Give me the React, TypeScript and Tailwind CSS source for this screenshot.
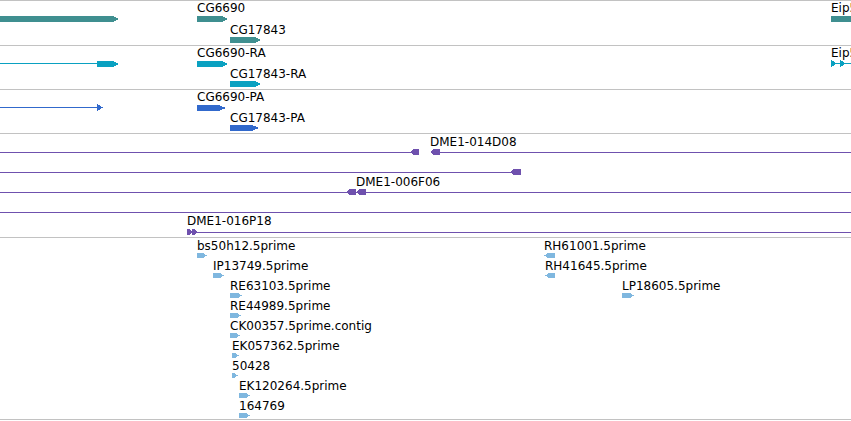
import React from "react";

type Label = { x: number; y: number; text: string };

// shapes are in page coordinates; each track shifts them by its own origin
type Shape =
  | { kind: "bar"; x0: number; x1: number; y: number; h: number; taper?: number }
  | { kind: "line"; x0: number; x1: number; y: number }
  | { kind: "right"; x0: number; x1: number; y: number; h: number; taper?: number }
  | { kind: "left"; x0: number; x1: number; y: number; h: number };

type TrackData = {
  top: number;
  height: number;
  color: string;
  labels: Label[];
  shapes: Shape[];
  last?: boolean;
};

const TEAL = "#3f8f90";
const CYAN = "#0aa1c1";
const BLUE = "#3169cc";
const PURPLE = "#6f51ae";
const LIGHT = "#7fb7df";

const tracks: TrackData[] = [
  {
    top: 0,
    height: 45,
    color: TEAL,
    labels: [
      { x: 197, y: 12, text: "CG6690" },
      { x: 230, y: 34, text: "CG17843" },
      { x: 831, y: 12, text: "Eip55E" },
    ],
    shapes: [
      { kind: "bar", x0: 0, x1: 119, y: 16, h: 6 },
      { kind: "bar", x0: 197, x1: 228, y: 16, h: 6 },
      { kind: "bar", x0: 230, x1: 261, y: 37, h: 6 },
      { kind: "bar", x0: 831, x1: 860, y: 16, h: 6 },
    ],
  },
  {
    top: 45,
    height: 44,
    color: CYAN,
    labels: [
      { x: 197, y: 57, text: "CG6690-RA" },
      { x: 230, y: 78, text: "CG17843-RA" },
      { x: 831, y: 57, text: "Eip55E-RA" },
    ],
    shapes: [
      { kind: "line", x0: 0, x1: 98, y: 63 },
      { kind: "bar", x0: 97, x1: 119, y: 61, h: 6 },
      { kind: "bar", x0: 197, x1: 228, y: 61, h: 6 },
      { kind: "bar", x0: 230, x1: 261, y: 81, h: 6 },
      { kind: "line", x0: 831, x1: 851, y: 63 },
      { kind: "right", x0: 831, x1: 837, y: 60, h: 7, taper: 6 },
      { kind: "right", x0: 840, x1: 846, y: 60, h: 7, taper: 6 },
    ],
  },
  {
    top: 89,
    height: 44,
    color: BLUE,
    labels: [
      { x: 197, y: 101, text: "CG6690-PA" },
      { x: 230, y: 122, text: "CG17843-PA" },
    ],
    shapes: [
      { kind: "line", x0: 0, x1: 98, y: 107 },
      { kind: "right", x0: 97, x1: 103, y: 104, h: 7, taper: 6 },
      { kind: "bar", x0: 197, x1: 226, y: 105, h: 6, taper: 7 },
      { kind: "bar", x0: 230, x1: 259, y: 125, h: 6, taper: 7 },
    ],
  },
  {
    top: 133,
    height: 104,
    color: PURPLE,
    labels: [
      { x: 430, y: 146, text: "DME1-014D08" },
      { x: 356, y: 186, text: "DME1-006F06" },
      { x: 187, y: 225, text: "DME1-016P18" },
    ],
    shapes: [
      { kind: "line", x0: 0, x1: 412, y: 152 },
      { kind: "left", x0: 410, x1: 419, y: 149, h: 6 },
      { kind: "left", x0: 430, x1: 440, y: 149, h: 6 },
      { kind: "line", x0: 438, x1: 851, y: 152 },
      { kind: "line", x0: 0, x1: 512, y: 172 },
      { kind: "left", x0: 510, x1: 521, y: 169, h: 6 },
      { kind: "line", x0: 0, x1: 851, y: 192 },
      { kind: "left", x0: 346, x1: 356, y: 189, h: 6 },
      { kind: "left", x0: 356, x1: 366, y: 189, h: 6 },
      { kind: "line", x0: 0, x1: 851, y: 212 },
      { kind: "line", x0: 189, x1: 851, y: 232 },
      { kind: "right", x0: 187, x1: 193, y: 229, h: 6 },
      { kind: "right", x0: 192, x1: 198, y: 229, h: 6 },
    ],
  },
];

const ests: { x: number; x1: number; text: string; row: number; dir: "r" | "l" }[] = [
  { x: 197, x1: 207, text: "bs50h12.5prime", row: 0, dir: "r" },
  { x: 213, x1: 224, text: "IP13749.5prime", row: 1, dir: "r" },
  { x: 230, x1: 242, text: "RE63103.5prime", row: 2, dir: "r" },
  { x: 230, x1: 241, text: "RE44989.5prime", row: 3, dir: "r" },
  { x: 230, x1: 240, text: "CK00357.5prime.contig", row: 4, dir: "r" },
  { x: 232, x1: 239, text: "EK057362.5prime", row: 5, dir: "r" },
  { x: 232, x1: 238, text: "50428", row: 6, dir: "r" },
  { x: 239, x1: 250, text: "EK120264.5prime", row: 7, dir: "r" },
  { x: 239, x1: 250, text: "164769", row: 8, dir: "r" },
  { x: 544, x1: 555, text: "RH61001.5prime", row: 0, dir: "l" },
  { x: 545, x1: 555, text: "RH41645.5prime", row: 1, dir: "l" },
  { x: 622, x1: 634, text: "LP18605.5prime", row: 2, dir: "r" },
];

tracks.push({
  top: 237,
  height: 183,
  color: LIGHT,
  last: true,
  labels: ests.map((e) => ({ x: e.x, y: 250 + e.row * 20, text: e.text })),
  shapes: ests.map((e) =>
    e.dir === "r"
      ? ({ kind: "right", x0: e.x, x1: e.x1, y: 253 + e.row * 20, h: 5 } as Shape)
      : ({ kind: "left", x0: e.x, x1: e.x1, y: 253 + e.row * 20, h: 5 } as Shape)
  ),
});

const ShapeGlyph = ({ s, color }: { s: Shape; color: string }) => {
  if (s.kind === "line") {
    return <rect x={s.x0} y={s.y} width={s.x1 - s.x0} height={1} fill={color} />;
  }
  if (s.kind === "bar") {
    const t = s.taper ?? 6;
    const pts = `${s.x0},${s.y} ${s.x1 - t},${s.y} ${s.x1},${s.y + s.h / 2} ${s.x1 - t},${s.y + s.h} ${s.x0},${s.y + s.h}`;
    return <polygon points={pts} fill={color} />;
  }
  const w = s.x1 - s.x0;
  if (s.kind === "right") {
    const t = s.taper ?? Math.min(4, w - 1);
    const pts = `${s.x0},${s.y} ${s.x1 - t},${s.y} ${s.x1},${s.y + s.h / 2} ${s.x1 - t},${s.y + s.h} ${s.x0},${s.y + s.h}`;
    return <polygon points={pts} fill={color} />;
  }
  const t = Math.min(4, w - 1);
  const pts = `${s.x0},${s.y + s.h / 2} ${s.x0 + t},${s.y} ${s.x1},${s.y} ${s.x1},${s.y + s.h} ${s.x0 + t},${s.y + s.h}`;
  return <polygon points={pts} fill={color} />;
};

const Track = ({ track }: { track: TrackData }) => {
  const origin = track.top + 1;
  return (
    <div
      className={`relative w-full overflow-hidden border-t border-[#c2c2c2] ${track.last ? "border-b" : ""}`}
      style={{ height: track.height }}
    >
      <svg className="absolute left-0 top-0" width={851} height={track.height} shapeRendering="crispEdges">
        <g transform={`translate(0,${-origin})`}>
          {track.shapes.map((s, i) => (
            <ShapeGlyph key={i} s={s} color={track.color} />
          ))}
        </g>
      </svg>
      {track.labels.map((l) => (
        <span
          key={l.text}
          className="absolute whitespace-nowrap text-[12px] leading-[14px] text-black"
          style={{ left: l.x, top: l.y - 11 - origin }}
        >
          {l.text}
        </span>
      ))}
    </div>
  );
};

export default function App() {
  return (
    <div className="flex h-[421px] w-[851px] flex-col overflow-hidden bg-white font-['DejaVu_Sans',sans-serif]">
      {tracks.map((t) => (
        <Track key={t.top} track={t} />
      ))}
    </div>
  );
}
